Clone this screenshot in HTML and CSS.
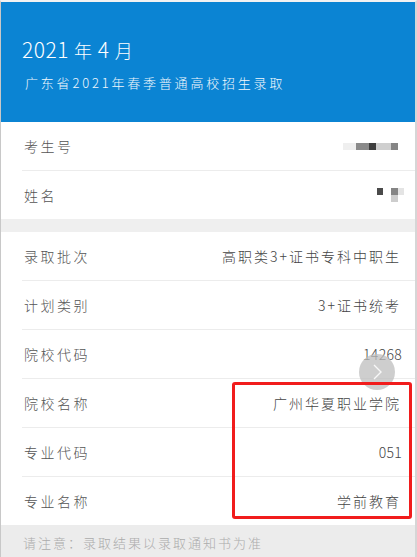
FILE: index.html
```html
<!DOCTYPE html>
<html lang="zh">
<head>
<meta charset="utf-8">
<link rel="stylesheet" href="styles.css">
</head>
<body>
<div class="page">
  <header class="hero">
    <h1 class="title">2021 <span class="cjk">年</span> 4 <span class="cjk">月</span></h1>
    <p class="subtitle">广东省2021年春季普通高校招生录取</p>
  </header>
  <section class="group">
    <div class="row">
      <span class="label">考生号</span>
      <span class="mosaic id">
        <i class="px l1"></i><i class="px g1"></i><i class="px d1"></i><i class="px l2"></i><i class="px g2"></i>
      </span>
    </div>
    <div class="row last">
      <span class="label">姓名</span>
      <span class="mosaic name">
        <i class="px dk"></i><i class="px gap"></i><span class="stack"><i class="px g2"></i><i class="px l3"></i></span><i class="px l4"></i>
      </span>
    </div>
  </section>
  <div class="band"></div>
  <section class="group">
    <div class="row"><span class="label">录取批次</span><span class="value">高职类3+证书专科中职生</span></div>
    <div class="row"><span class="label">计划类别</span><span class="value">3+证书统考</span></div>
    <div class="row"><span class="label">院校代码</span><span class="value num">14268</span></div>
    <div class="row"><span class="label">院校名称</span><span class="value">广州华夏职业学院</span></div>
    <div class="row"><span class="label">专业代码</span><span class="value num">051</span></div>
    <div class="row last"><span class="label">专业名称</span><span class="value">学前教育</span></div>
  </section>
  <footer class="note">请注意：录取结果以录取通知书为准</footer>
  <div class="fab">
    <svg width="14" height="20" viewBox="0 0 14 20"><path d="M4 3 L11 10 L4 17" fill="none" stroke="#fff" stroke-width="1.4" opacity="0.85"/></svg>
  </div>
  <div class="highlight"></div>
</div>
</body>
</html>
```

FILE: styles.css
```css
* { box-sizing: border-box; }
html, body {
  margin: 0;
  padding: 0;
  background: #fff;
}
body {
  font-family: "Noto Sans CJK SC", "Noto Sans", sans-serif;
  font-weight: 300;
  width: 417px;
  height: 557px;
  overflow: hidden;
}
.page {
  position: relative;
  width: 417px;
  height: 557px;
  border-top: 2px solid #f2f2f2;
  border-left: 1px solid #c8c8c8;
  border-right: 2px solid #d6d6d6;
  background: #fff;
}
.hero {
  background: #0b84d3;
  height: 120px;
  padding: 32px 0 0 21px;
  color: #fff;
}
.title {
  margin: 0;
  font-size: 21px;
  font-weight: 300;
  line-height: 30px;
  letter-spacing: 0.5px;
}
.title .cjk {
  font-size: 18px;
}
.subtitle {
  margin: 8px 0 0 3px;
  font-size: 13px;
  line-height: 20px;
  letter-spacing: 2.8px;
  color: #f2f8fd;
}
.group {
  background: #fff;
}
.row {
  height: 49px;
  margin-left: 21px;
  padding-right: 14px;
  display: flex;
  align-items: center;
  justify-content: space-between;
  border-bottom: 1px solid #ececec;
}
.row.last {
  border-bottom: none;
  height: 48px;
}
.label {
  font-size: 14px;
  letter-spacing: 2.5px;
  color: #555;
  margin-left: 2px;
}
.value {
  font-size: 14px;
  letter-spacing: 2px;
  color: #444;
}
.value.num {
  letter-spacing: 0.3px;
  margin-right: -1px;
}
.band {
  height: 13px;
  background: #efefef;
}
.note {
  height: 34px;
  background: #ececec;
  padding-left: 22px;
  display: flex;
  align-items: center;
  font-size: 13px;
  letter-spacing: 2px;
  color: #ababab;
}
.mosaic {
  display: flex;
  align-items: flex-start;
}
.mosaic.id { margin-right: 3px; }
.mosaic.name { margin-right: -3px; }
.px {
  display: block;
  height: 7px;
}
.l1 { width: 13px; background: #efefef; }
.g1 { width: 13px; background: #8a8a8a; }
.d1 { width: 7px; background: #3e3e3e; }
.l2 { width: 15px; background: #cfcfcf; }
.g2 { width: 7px; background: #858585; }
.dk { width: 6px; background: #4a4a4a; }
.gap { width: 8px; }
.stack { display: flex; flex-direction: column; }
.l3 { width: 7px; background: #cdcdcd; }
.l4 { width: 6px; background: #e4e4e4; }
.fab {
  position: absolute;
  left: 358px;
  top: 352px;
  width: 36px;
  height: 36px;
  border-radius: 50%;
  background: rgba(190, 190, 190, 0.75);
  display: flex;
  align-items: center;
  justify-content: center;
}
.highlight {
  position: absolute;
  left: 231px;
  top: 380px;
  width: 180px;
  height: 137px;
  border: 3px solid #f11c1c;
  border-radius: 3px;
}
```
